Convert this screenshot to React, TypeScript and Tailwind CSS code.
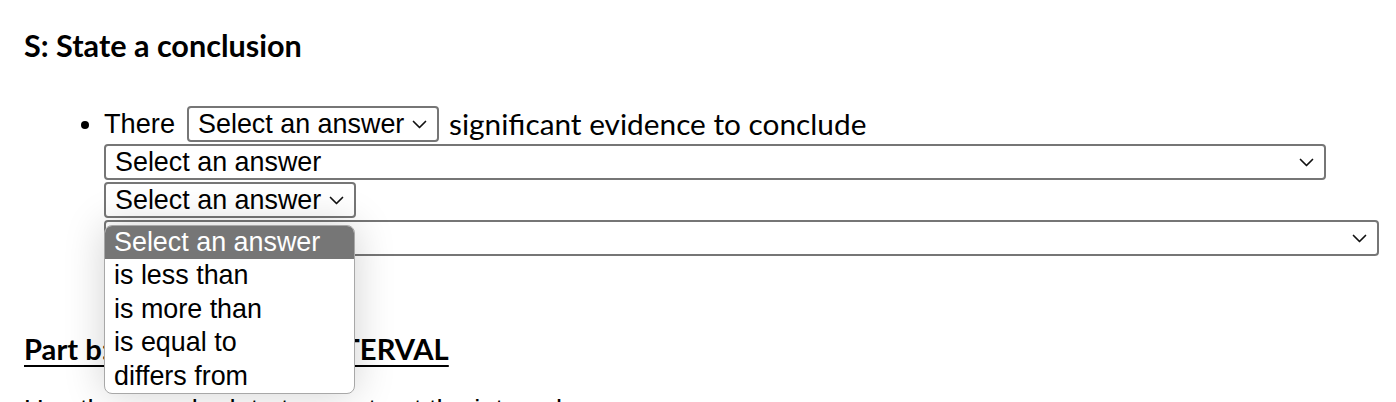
import React from 'react';

const ARIAL = "font-['Liberation_Sans',Arial,sans-serif]";
const HEAD = "font-['Lato','DejaVu_Sans',sans-serif]";

function Chevron() {
  return (
    <svg width="15" height="9" viewBox="0 0 15 9" fill="none" className="shrink-0 ml-auto">
      <path d="M1.5 1.5 L7.5 7.5 L13.5 1.5" stroke="#111" strokeWidth="1.7" strokeLinecap="round" strokeLinejoin="round" />
    </svg>
  );
}

function FakeSelect({ width, label = 'Select an answer' }: { width: string; label?: string }) {
  return (
    <div
      className={`${width} h-[36px] flex items-center pl-[9px] pr-[10px] border-2 border-[#767676] rounded-[4px] bg-white text-[26.9px] leading-none text-black whitespace-nowrap ${ARIAL}`}
    >
      <span className="mr-[8px]">{label}</span>
      <Chevron />
    </div>
  );
}

const options = ['is less than', 'is more than', 'is equal to', 'differs from'];

export default function App() {
  return (
    <div className="relative w-[1396px] h-[402px] overflow-hidden bg-white text-black">
      <h3 className={`pl-[24px] pt-[30px] text-[30.6px] leading-[32px] font-bold ${HEAD}`}>S: State a conclusion</h3>

      <ul className="list-disc pl-[104px] mt-[42px]">
        <li className={`text-[27.2px] ${ARIAL}`}>
          <div className="flex items-center gap-[10px] h-[36px]">
            <span className="mr-[2px]">There</span>
            <FakeSelect width="w-[252px]" />
            <span className={`${HEAD} text-[29.8px]`}>significant evidence to conclude</span>
          </div>
          <div className="flex flex-col gap-[2px] mt-[2px]">
            <FakeSelect width="w-[1222px]" />
            <FakeSelect width="w-[252px]" />
            <FakeSelect width="w-[1275px]" />
          </div>
        </li>
      </ul>

      <h3 className={`pl-[24px] mt-[77px] text-[29.2px] leading-[32px] font-bold underline underline-offset-[5px] decoration-2 ${HEAD}`}>
        Part b: CONFIDENCE INTERVAL
      </h3>
      <p className={`pl-[24px] mt-[25px] text-[27.2px] ${ARIAL}`}>Use the sample data to construct the interval.</p>

      {/* open dropdown list */}
      <div
        className={`absolute left-[104px] top-[225px] w-[251px] rounded-[8px] border border-[#a8a8a8] bg-white shadow-[0_0_40px_rgba(0,0,0,0.18)] overflow-hidden text-[26.9px] leading-[33.6px] ${ARIAL}`}
      >
        <div className="bg-[#767676] text-white pl-[9px] h-[33px]">Select an answer</div>
        {options.map((o) => (
          <div key={o} className="pl-[9px] h-[33.6px]">
            {o}
          </div>
        ))}
      </div>
    </div>
  );
}
